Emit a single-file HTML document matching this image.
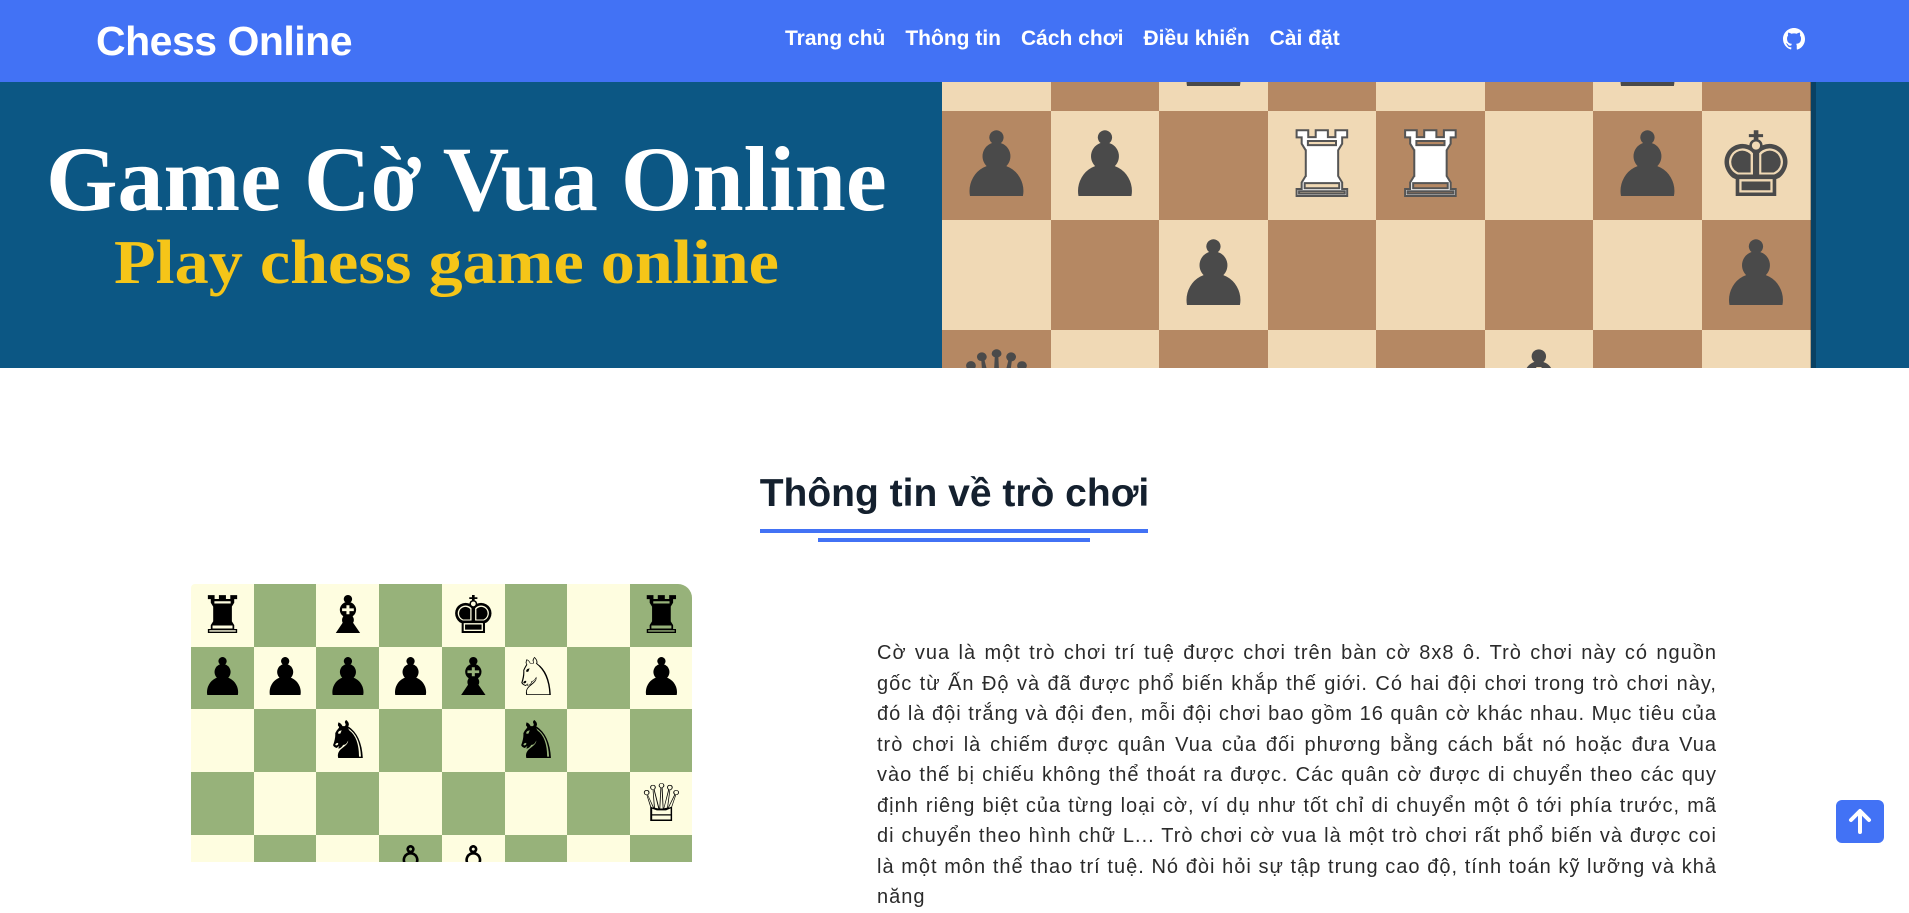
<!DOCTYPE html>
<html><head><meta charset="utf-8"><style>
*{margin:0;padding:0;box-sizing:border-box}
body{width:1909px;height:862px;overflow:hidden;background:#fff;font-family:"Liberation Sans","DejaVu Sans",sans-serif;position:relative}
.nav{position:absolute;left:0;top:0;width:1909px;height:82px;background:#4272f5}
.logo{position:absolute;left:96px;top:18px;color:#fff;font-size:41px;font-weight:bold;letter-spacing:-0.5px}
.links{position:absolute;left:785px;top:27px;color:#fff;font-size:21px;font-weight:bold;display:flex;gap:20px}
.banner{position:absolute;left:0;top:82px;width:1909px;height:286px;background:#0c5784;overflow:hidden}
.t1{position:absolute;left:46px;top:44px;color:#fff;font-family:"Liberation Serif",serif;font-weight:bold;font-size:92px;white-space:nowrap}
.t2{position:absolute;left:114px;top:146px;color:#f5c518;font-family:"Liberation Serif",serif;font-weight:bold;font-size:62px;white-space:nowrap;transform:scaleX(1.1);transform-origin:left}
.board{position:absolute;left:942px;top:-81px;width:868px}
.sq{position:absolute;width:109px;height:110px;display:flex;align-items:center;justify-content:center;font-family:"DejaVu Sans",sans-serif;font-size:90px;line-height:1}
.shadow{position:absolute;left:1810px;top:0;width:6px;height:286px;background:rgba(0,0,0,.25)}
h2{position:absolute;left:0;width:1909px;text-align:center;top:472px;font-size:39px;font-weight:bold;color:#14202e}
.u1{position:absolute;left:760px;top:529px;width:388px;height:4px;background:#4272f5}
.u2{position:absolute;left:818px;top:538px;width:272px;height:4px;background:#4272f5}
.sb{position:absolute;left:191px;top:584px;width:501px;height:278px;overflow:hidden;border-top-right-radius:14px;border-top-left-radius:4px}
.s{position:absolute;width:63px;height:63px;display:flex;align-items:center;justify-content:center;font-family:"DejaVu Sans",sans-serif;font-size:52px;line-height:1;color:#000}
p{position:absolute;left:877px;top:638px;width:840px;font-size:20px;line-height:30.5px;color:#2a2a2a;text-align:justify;letter-spacing:1px}
.top{position:absolute;left:1836px;top:800px;width:48px;height:43px;background:#4272f5;border-radius:6px}
</style></head><body>
<div class="nav">
<div class="logo">Chess Online</div>
<div class="links"><span>Trang chủ</span><span>Thông tin</span><span>Cách chơi</span><span>Điều khiển</span><span>Cài đặt</span></div>
<svg style="position:absolute;left:1783px;top:28px" width="22" height="22" viewBox="0 0 16 16"><path fill="#fff" d="M8 0C3.580 0 0 3.58 0 8c0 3.54 2.29 6.53 5.47 7.59.4.07.55-.17.55-.38v-1.34c-2.230.48-2.7-1.07-2.7-1.07-.36-.92-.89-1.170-.89-1.17-.73-.5.06-.49.06-.49.8.06 1.23.83 1.23.83.72 1.23 1.88.87 2.34.67.07-.52.28-.87.51-1.07-1.78-.2-3.65-.89-3.65-3.95 0-.87.31-1.59.82-2.15-.08-.2-.36-1.02.08-2.12 0 0 .67-.21 2.2.82a7.6 7.6 0 0 1 4 0c1.53-1.04 2.2-.82 2.2-.82.44 1.1.16 1.92.08 2.12.51.56.82 1.27.82 2.15 0 3.07-1.87 3.75-3.65 3.95.29.25.54.73.54 1.48v2.2c0 .21.15.46.55.38A8.01 8.01 0 0 0 16 8c0-4.42-3.58-8-8-8z"/></svg>
</div>
<div class="banner">
<div class="t1">Game Cờ Vua Online</div>
<div class="t2">Play chess game online</div>
<div class="board" id="bb"></div>
<div class="shadow"></div>
</div>
<h2>Thông tin về trò chơi</h2>
<div class="u1"></div><div class="u2"></div>
<div class="sb" id="sb"></div>
<p>Cờ vua là một trò chơi trí tuệ được chơi trên bàn cờ 8x8 ô. Trò chơi này có nguồn gốc từ Ấn Độ và đã được phổ biến khắp thế giới. Có hai đội chơi trong trò chơi này, đó là đội trắng và đội đen, mỗi đội chơi bao gồm 16 quân cờ khác nhau. Mục tiêu của trò chơi là chiếm được quân Vua của đối phương bằng cách bắt nó hoặc đưa Vua vào thế bị chiếu không thể thoát ra được. Các quân cờ được di chuyển theo các quy định riêng biệt của từng loại cờ, ví dụ như tốt chỉ di chuyển một ô tới phía trước, mã di chuyển theo hình chữ L... Trò chơi cờ vua là một trò chơi rất phổ biến và được coi là một môn thể thao trí tuệ. Nó đòi hỏi sự tập trung cao độ, tính toán kỹ lưỡng và khả năng</p>
<div class="top"><svg width="48" height="43" viewBox="0 0 48 43"><path d="M24 32V12M15 20l9-9 9 9" stroke="#fff" stroke-width="4" fill="none" stroke-linecap="round" stroke-linejoin="round"/></svg></div>
<script>
var bb=document.getElementById('bb'),h='';
var P={"0,2":"♟","0,6":"♟","1,0":"♟","1,1":"♟","1,3":"♜","1,4":"♜","1,6":"♟","1,7":"♚","2,2":"♟","2,7":"♟","3,0":"♛","3,5":"♝"};
var W={"1,3":1,"1,4":1};
for(var r=0;r<4;r++)for(var c=0;c<8;c++){var d=(r+c)%2==1;var k=r+","+c;var p=P[k]||'';
h+='<div class="sq" style="left:'+(c*108.5)+'px;top:'+(r*109.5)+'px;background:'+(d?'#b58863':'#f0d9b5')+';color:'+(W[k]?'#fff':'#4a4a4a')+';'+(W[k]?'-webkit-text-stroke:2px #555':'')+'">'+p+'</div>';}
bb.innerHTML=h;
var sb=document.getElementById('sb');h='';
var Q={"0,0":"♜","0,2":"♝","0,4":"♚","0,7":"♜","1,0":"♟","1,1":"♟","1,2":"♟","1,3":"♟","1,4":"♝","1,5":"♘","1,7":"♟","2,2":"♞","2,5":"♞","3,7":"♕","4,3":"♙","4,4":"♙"};
for(var r=0;r<5;r++)for(var c=0;c<8;c++){var d=(r+c)%2==1;var k=r+","+c;
h+='<div class="s" style="left:'+(c*62.7)+'px;top:'+(r*62.7)+'px;background:'+(d?'#97b27a':'#fefde0')+'">'+(Q[k]||'')+'</div>';}
sb.innerHTML=h;
</script>
</body></html>
